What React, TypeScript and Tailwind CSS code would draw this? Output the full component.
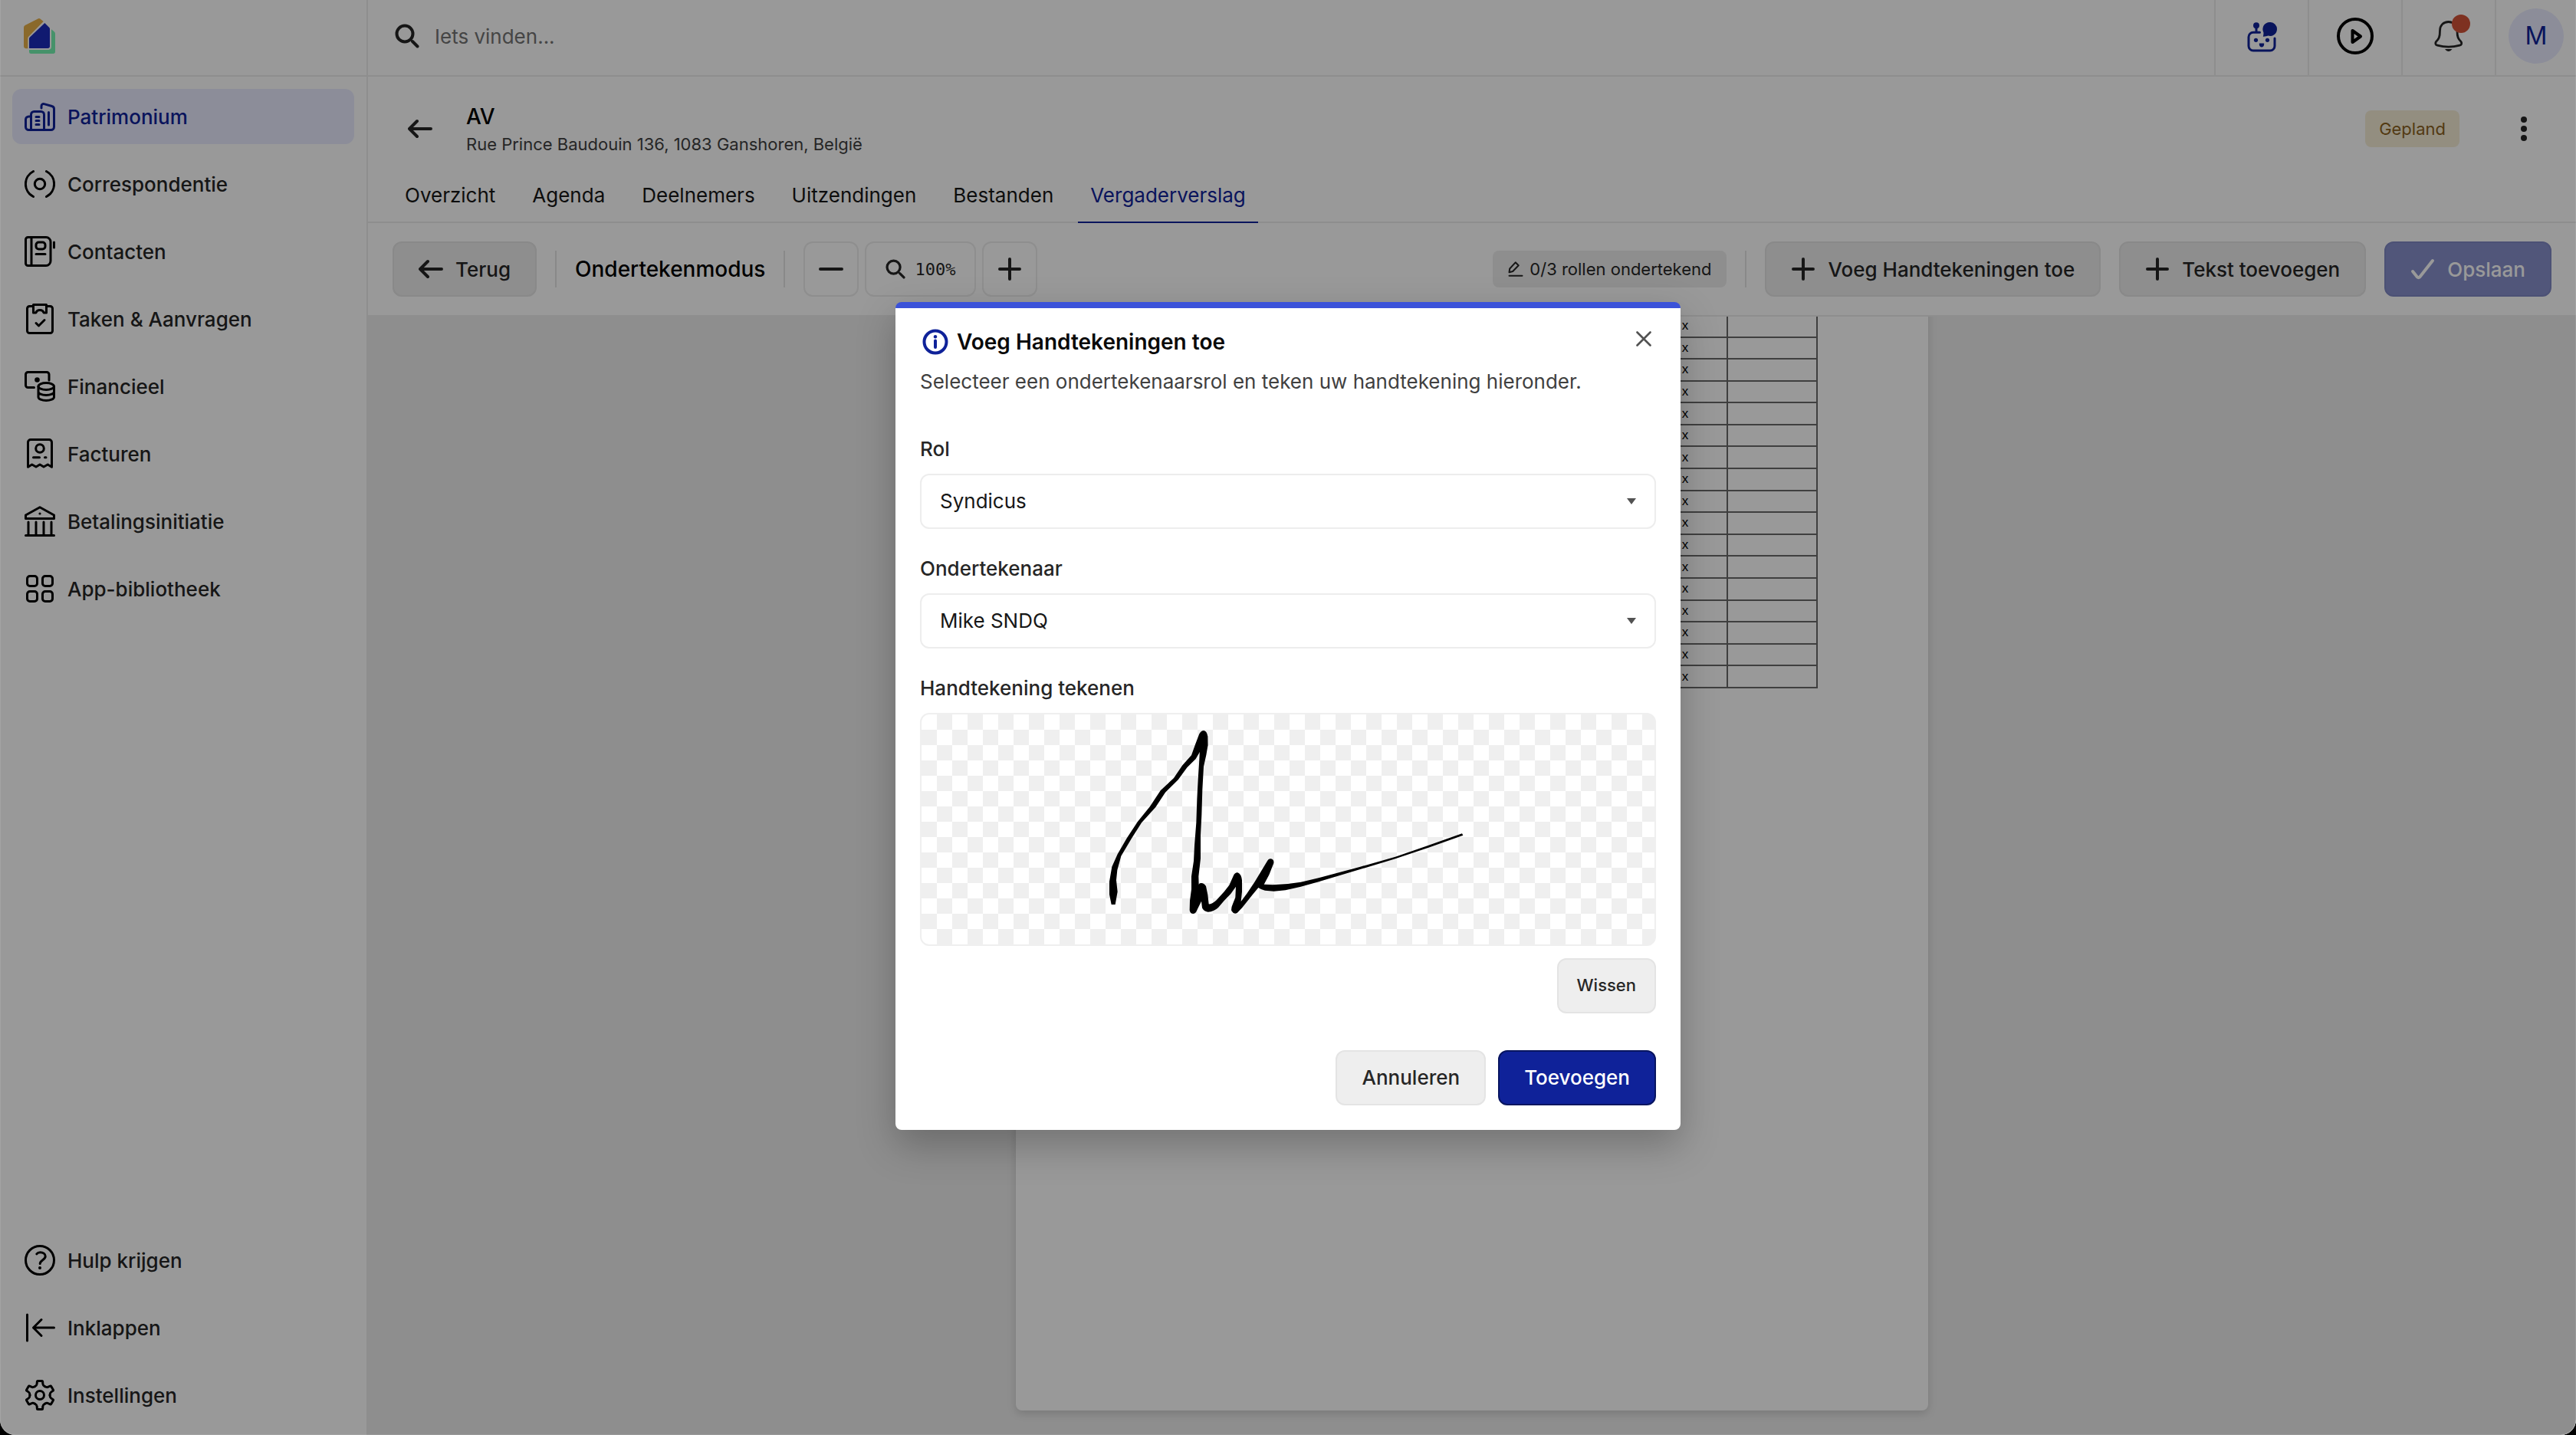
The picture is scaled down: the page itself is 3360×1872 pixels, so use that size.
import { useState } from "react";
import type { ReactNode } from "react";

const tabs = ["Overzicht", "Agenda", "Deelnemers", "Uitzendingen", "Bestanden", "Vergaderverslag"];

function SideIcon({ children }: { children: ReactNode }) {
  return (
    <svg
      viewBox="0 0 40 40"
      className="size-10 shrink-0"
      fill="none"
      stroke="currentColor"
      strokeWidth="3"
      strokeLinecap="round"
      strokeLinejoin="round"
      aria-hidden="true"
    >
      {children}
    </svg>
  );
}

const mainNav: { label: string; icon: ReactNode }[] = [
  {
    label: "Patrimonium",
    icon: (
      <>
        <path d="M22 9V6.500c0-2 1.600-3.400 3.500-2.900l10.200 2.900c1.600.4 2.800 1.900 2.800 3.600v23.400a4 4 0 0 1-4 4h-29a4 4 0 0 1-4-4V24a4 4 0 0 1 4-4H8" />
        <path d="M8.500 37.500v-20a4 4 0 0 1 4-4h9a4 4 0 0 1 4 4v20M15 20.500h4M15 25.500h4M15 30.500h4M31.500 14.500v16.500" />
      </>
    ),
  },
  {
    label: "Correspondentie",
    icon: (
      <>
        <circle cx="20" cy="20" r="6.700" />
        <path d="M11.500 3.500a18.500 18.500 0 0 0 0 33M28.500 3.500a18.500 18.500 0 0 1 0 33" />
      </>
    ),
  },
  {
    label: "Contacten",
    icon: (
      <>
        <path d="M4.500 1.500H28a6 6 0 0 1 6 6v25a6 6 0 0 1-6 6H4.500a3 3 0 0 1-3-3v-31a3 3 0 0 1 3-3ZM9 2v36M15 23.500h12M38.500 8v7" />
        <rect x="15" y="8" width="12" height="9" rx="3.500" />
      </>
    ),
  },
  {
    label: "Taken & Aanvragen",
    icon: (
      <>
        <path d="M11 3.500H6.500a3 3 0 0 0-3 3v29a3 3 0 0 0 3 3h27a3 3 0 0 0 3-3v-29a3 3 0 0 0-3-3H29" />
        <path d="M11.500 1.500h17V12H25c-.5-2-2.500-3.500-5-3.500s-4.500 1.500-5 3.500h-3.500ZM15 25.500l3.500 3.500 7.500-7.500" />
      </>
    ),
  },
  {
    label: "Financieel",
    icon: (
      <>
        <path d="M12.500 21.500h-8a3 3 0 0 1-3-3v-14a3 3 0 0 1 3-3H29a3 3 0 0 1 3 3V12" />
        <circle cx="16.500" cy="11.500" r="1.800" fill="currentColor" />
        <ellipse cx="28.200" cy="20" rx="10.200" ry="4.500" />
        <path d="M18 20v14c0 2.500 4.600 4.500 10.200 4.500S38.500 36.500 38.500 34V20M18 27c0 2.500 4.600 4.500 10.200 4.500S38.500 29.500 38.500 27" />
      </>
    ),
  },
  {
    label: "Facturen",
    icon: (
      <>
        <path d="M4.500 37.200V5a3.500 3.500 0 0 1 3.500-3.500h24A3.500 3.500 0 0 1 35.500 5v32.200L30.300 34 25 37l-5-3-5 3-5.300-3ZM11.500 24.700h8M26.500 24.700h1.500" />
        <circle cx="20" cy="13" r="5.300" />
      </>
    ),
  },
  {
    label: "Betalingsinitiatie",
    icon: (
      <>
        <path d="M1.500 16.500V12L20 1.800 38.500 12v4.500ZM5 21v16M15 21v16M25 21v16M35 21v16M1.500 38.500h37" />
        <circle cx="20" cy="10" r="1.600" fill="currentColor" stroke="none" />
      </>
    ),
  },
  {
    label: "App-bibliotheek",
    icon: (
      <>
        <rect x="3.500" y="3.500" width="13" height="13" rx="3.500" />
        <rect x="23.500" y="3.500" width="13" height="13" rx="3.500" />
        <rect x="3.500" y="23.500" width="13" height="13" rx="3.500" />
        <rect x="23.500" y="23.500" width="13" height="13" rx="3.500" />
      </>
    ),
  },
];

const footNav: { label: string; icon: ReactNode }[] = [
  {
    label: "Hulp krijgen",
    icon: (
      <>
        <circle cx="20" cy="20" r="18.500" />
        <path d="M15.800 11.800c1-1.300 2.600-2 4.700-2 3.800 0 6.700 2 6.700 5.200 0 4.500-7 5-7 9.500" />
        <circle cx="20" cy="30" r="2" fill="currentColor" stroke="none" />
      </>
    ),
  },
  {
    label: "Inklappen",
    icon: <path d="M3.500 3v34M38.500 20h-27M22 9.500 11.500 20 22 30.500" />,
  },
  {
    label: "Instellingen",
    icon: (
      <>
        {[0, 60, 120, 180, 240, 300].map((deg) => (
          <path
            key={deg}
            transform={`rotate(${deg} 20 20)`}
            d="M13.500 8.700C15.200 7.700 16 7 16.100 5.500L16.400 2.500a1 1 0 0 1 1-1h5.200a1 1 0 0 1 1 1L23.900 5.500C24 7 24.800 7.700 26.500 8.700"
          />
        ))}
        <circle cx="20" cy="20" r="5.500" />
      </>
    ),
  },
];

function NavItem({ label, icon, active }: { label: string; icon: ReactNode; active?: boolean }) {
  return (
    <a
      href="#"
      className={
        active
          ? "flex h-18 items-center gap-4 rounded-xl bg-[#e9ecff] px-4 text-[26px] font-medium text-[#0f2299]"
          : "flex h-18 items-center gap-4 rounded-xl px-4 text-[26px] font-medium text-[#262626]"
      }
    >
      <span className={active ? "text-[#0f2299]" : "text-black"}>
        <SideIcon>{icon}</SideIcon>
      </span>
      {label}
    </a>
  );
}

function Glyph({ d, className }: { d: string; className?: string }) {
  return (
    <svg
      viewBox="0 0 32 32"
      className={className ?? "size-8 shrink-0"}
      fill="none"
      stroke="currentColor"
      strokeWidth="4"
      strokeLinecap="round"
      strokeLinejoin="round"
      aria-hidden="true"
    >
      <path d={d} />
    </svg>
  );
}

const ARROW = "M30 16H2M12 6 2 16l10 10";
const PLUS = "M16 3v26M3 16h26";
const MINUS = "M2 16h28";
const SEARCH = "M13 2.500a10.500 10.500 0 1 0 0 21 10.500 10.500 0 0 0 0-21ZM23 23l6.500 6.500";

function Logo() {
  return (
    <svg viewBox="90 66 129 144" className="h-12 w-[43px]" aria-label="SNDQ" role="img">
      <path d="M93 178v-73q0-6 5-9l49-25q7-4 12 1l11 9-58 59q-3 3-3 7v40h-7q-9-1-9-9Z" fill="#e6b049" />
      <path d="m175 87 18 18q2 2 2 5v68q0 8-8 8h-73v-38q0-3 2-5Z" fill="#1b2cbb" />
      <path d="m201 112 11 9q4 3 4 8v70q0 8-8 8h-87q-7 0-7-7v-8h76q11-1 11-12Z" fill="#75f3b1" />
    </svg>
  );
}

function TopBar() {
  return (
    <header className="flex h-25 shrink-0 border-b-2 border-[#ededed]">
      <label className="flex flex-1 items-center gap-5 pb-1 pl-[35px]">
        <Glyph d={SEARCH} className="size-8 shrink-0 text-[#262626]" />
        <input
          type="search"
          placeholder="Iets vinden..."
          aria-label="Iets vinden"
          className="h-12 flex-1 bg-transparent text-[26px] outline-none placeholder:text-[#737373]"
        />
      </label>
      <button aria-label="Assistent" className="flex w-[122px] items-center justify-center border-l-2 border-[#ededed] text-[#0f2299]">
        <svg viewBox="0 0 40 40" className="size-10" fill="none" stroke="currentColor" strokeWidth="3" strokeLinecap="round">
          <path d="M17.500 13.300H9a6 6 0 0 0-6 6V31a6 6 0 0 0 6 6h22a6 6 0 0 0 6-6V21M13 5v8" />
          <g fill="currentColor" stroke="none">
            <circle cx="13" cy="4.300" r="4" />
            <circle cx="12.500" cy="23.300" r="2.600" />
            <circle cx="27.500" cy="23.300" r="2.600" />
            <path d="M17 27.500h6c.8 2.500-1 5-3 5s-3.800-2.500-3-5ZM30.400 0a9 9 0 1 1-2 17.600c-2 .8-4 1.200-6.600 1.100.6-2 .8-3.500.6-5.500A9 9 0 0 1 30.400 0Z" />
          </g>
        </svg>
      </button>
      <button aria-label="Afspelen" className="flex w-[122px] items-center justify-center border-l-2 border-[#ededed] pb-1">
        <svg viewBox="0 0 48 48" className="size-12" fill="none" stroke="currentColor" strokeWidth="4" strokeLinejoin="round">
          <circle cx="24" cy="24" r="22" />
          <path d="M20.500 17v15L31 24.500Z" />
        </svg>
      </button>
      <button aria-label="Meldingen" className="flex w-[122px] items-center justify-center border-l-2 border-[#ededed] pb-1 text-[#262626]">
        <span className="relative">
          <svg viewBox="0 0 40 40" className="size-10" fill="none" stroke="currentColor" strokeWidth="2.800" strokeLinejoin="round">
            <path d="M8.500 13C8.500 6 13 1.500 19.700 1.500S31 6 31 13c0 8.500 1.500 11 4.700 14 2 2.200 1.200 4.500-1.400 5.200-8.500 2.300-20.600 2.300-29.100 0C2.600 31.500 1.800 29.200 3.800 27 7 24 8.500 21.500 8.500 13Z" />
            <path d="M15 37c3 4 6.500 4 9.500 0Z" fill="currentColor" stroke="none" />
          </svg>
          <span className="absolute -top-2 left-6 size-6 rounded-full bg-[#d35338]" />
        </span>
      </button>
      <div className="flex items-center border-l-2 border-[#ededed] pr-4 pb-1 pl-4">
        <button className="flex size-18 items-center justify-center rounded-full bg-[#e9ecff] text-[32px] text-[#0f2299]">M</button>
      </div>
    </header>
  );
}

function PageHeader() {
  return (
    <div className="shrink-0 border-b-2 border-[#ededed] px-8 pt-8">
      <div className="flex h-18 items-center">
        <button aria-label="Terug naar overzicht" className="flex size-18 items-center justify-center text-[#262626]">
          <Glyph d={ARROW} />
        </button>
        <div className="ml-6 flex-1">
          <h1 className="text-[28px] leading-10 font-medium">AV</h1>
          <p className="text-[22px] leading-8 text-[#404040]">Rue Prince Baudouin 136, 1083 Ganshoren, België</p>
        </div>
        <span className="mr-12 rounded-lg bg-[#f5edd5] px-[18px] text-[22px] leading-[48px] text-[#8a621e]">Gepland</span>
        <button aria-label="Meer" className="flex size-18 items-center justify-center text-[#262626]">
          <svg viewBox="0 0 32 32" className="size-8" fill="currentColor">
            <circle cx="16" cy="4" r="4" />
            <circle cx="16" cy="16" r="4" />
            <circle cx="16" cy="28" r="4" />
          </svg>
        </button>
      </div>
      <nav className="mt-4 -mb-[2px] flex gap-4">
        {tabs.map((tab) => (
          <a
            key={tab}
            href="#"
            className={
              tab === "Vergaderverslag"
                ? "border-b-2 border-[#0f2299] px-4 text-[26px] leading-[69px] text-[#0f2299]"
                : "border-b-2 border-transparent px-4 text-[26px] leading-[69px] text-[#171717]"
            }
          >
            {tab}
          </a>
        ))}
      </nav>
    </div>
  );
}

function Divider() {
  return <span className="h-12 w-[2px] bg-[#e4e4e4]" />;
}

function Toolbar({ onAdd }: { onAdd: () => void }) {
  const grey =
    "flex h-18 items-center gap-4 rounded-xl border-2 border-[#e4e4e4] bg-[#ededed] px-8 text-[26px] font-medium text-[#262626]";
  return (
    <div className="flex shrink-0 items-center gap-6 border-b-2 border-[#ededed] px-8 py-6">
      <button className={grey}>
        <Glyph d={ARROW} />
        Terug
      </button>
      <Divider />
      <h2 className="text-[28px] font-medium">Ondertekenmodus</h2>
      <Divider />
      <div className="flex gap-2 text-[#262626]">
        <button aria-label="Uitzoomen" className="flex size-18 items-center justify-center rounded-xl border-2 border-[#ededed]">
          <Glyph d={MINUS} />
        </button>
        <button className="flex h-18 items-center gap-3 rounded-xl border-2 border-[#ededed] px-[25px] font-['DejaVu_Sans_Mono',monospace] text-[22px]">
          <Glyph d={SEARCH} className="size-[26px] shrink-0" />
          100%
        </button>
        <button aria-label="Inzoomen" className="flex size-18 items-center justify-center rounded-xl border-2 border-[#ededed]">
          <Glyph d={PLUS} />
        </button>
      </div>
      <span className="ml-auto flex h-12 items-center gap-2 rounded-lg bg-[#ededed] px-5 text-[22px] text-[#262626]">
        <svg viewBox="0 0 20 20" className="size-5" fill="none" stroke="currentColor" strokeWidth="2" strokeLinecap="round" strokeLinejoin="round">
          <path d="M1.500 18.700h17M1.500 14.300 2.200 9.500 9.700 1.300l4 3.900-7.500 7.800Z" />
        </svg>
        0/3 rollen ondertekend
      </span>
      <Divider />
      <button className={grey} onClick={onAdd}>
        <Glyph d={PLUS} />
        Voeg Handtekeningen toe
      </button>
      <button className={grey}>
        <Glyph d={PLUS} />
        Tekst toevoegen
      </button>
      <button
        disabled
        className="flex h-18 items-center gap-4 rounded-xl border-2 border-[#7f87c3] bg-[#8790cc] px-8 text-[26px] font-medium text-white"
      >
        <Glyph d="M3 19l6 7.500Q11 28 12.500 26L29 5" />
        Opslaan
      </button>
    </div>
  );
}

function DocumentPage() {
  return (
    <main className="flex min-h-0 flex-1 items-end justify-center overflow-hidden bg-[#ededed] pb-8">
      <article className="h-[1684px] w-[1190px] shrink-0 rounded-lg bg-white px-36 pt-[254px] shadow-[0_4px_12px_rgba(0,0,0,0.15)]">
        <table className="h-[488px] w-full table-fixed border-collapse font-['Liberation_Sans',sans-serif] text-[17px] leading-5">
          <colgroup>
            <col />
            <col className="w-[110px]" />
            <col className="w-[117px]" />
          </colgroup>
          <tbody>
            {Array.from({ length: 17 }, (_, i) => (
              <tr key={i}>
                <td className="border-2 border-[#6a6a6a] p-0" />
                <td className="border-2 border-[#6a6a6a] p-0 text-center">x</td>
                <td className="border-2 border-[#6a6a6a] p-0" />
              </tr>
            ))}
          </tbody>
        </table>
      </article>
    </main>
  );
}

function SelectField({ id, label, options }: { id: string; label: string; options: string[] }) {
  return (
    <div className="mb-8">
      <label htmlFor={id} className="block text-[26px] leading-10 font-medium text-[#262626]">
        {label}
      </label>
      <div className="relative mt-3">
        <select
          id={id}
          className="h-18 w-full appearance-none rounded-xl border-2 border-[#ededed] bg-white px-6 text-[26px] text-[#171717] outline-none"
        >
          {options.map((o) => (
            <option key={o}>{o}</option>
          ))}
        </select>
        <svg viewBox="0 0 12 8" className="pointer-events-none absolute top-8 right-[26px] h-2 w-3" fill="#525252">
          <path d="M0 0h12L6 8Z" />
        </svg>
      </div>
    </div>
  );
}

function Signature() {
  return (
    <svg viewBox="-654 6 2868 900" className="size-full" role="img" aria-labelledby="sign-label">
      <path d="M89 750 81 710 81 660 91 602 113 553 150 489 192 425 240 366 281 304 333 255 367 205 402 166 417 124 433 82Q440 69 451 69 462 72 465 88L466 130 444 137 419 180 385 214 350 262 300 311 262 369 207 430 167 493 127 560 112 615 108 655 113 700 104 750Z" />
      <path d="M436 120 432 200 428 260 424 340 421 430 414 520 411 580 402 640 402 690 396 735 395 772Q396 786 410 786 420 784 424 772L441 737 444 763Q450 778 467 779 490 778 507 762L530 735 556 708 576 680 574 722 565 745Q556 765 559 775 568 790 581 783L601 762 641 712 664 684Q675 692 690 695L725 698 770 694 830 680 900 661 1060 613 1200 571 1330 527 1465 479 1461 472 1330 518 1200 563 1060 603 900 646 830 662 780 669 720 673 686 671 706 634 724 588Q726 574 713 571 704 570 698 581L679 613 650 661 620 706 596 738 600 700 600 655Q597 630 583 625 573 624 567 636L550 674 530 700 500 733Q482 750 470 748L466 712 459 678Q450 664 438 666 432 668 431 672L430 640 438 570 438 480 442 400 445 300 450 210 460 165 466 130 466 90Z" />
    </svg>
  );
}

function SignatureDialog({ onClose }: { onClose: () => void }) {
  const [signed, setSigned] = useState(true);

  return (
    <div
      role="dialog"
      aria-modal="true"
      aria-labelledby="dialog-title"
      className="w-full max-w-5xl overflow-hidden rounded-lg border-t-8 border-[#3b52d9] bg-white px-8 pt-6 pb-8 shadow-[0_20px_50px_rgba(0,0,0,0.25)]"
    >
      <div className="flex h-10 items-center gap-2">
        <svg viewBox="0 0 40 40" className="size-10 text-[#0f2299]" fill="none" stroke="currentColor" strokeWidth="4" aria-hidden="true">
          <circle cx="20" cy="20" r="14.500" />
          <path d="M20 18.500v8.500" strokeLinecap="round" />
          <circle cx="20" cy="13.200" r="2.200" fill="currentColor" stroke="none" />
        </svg>
        <h3 id="dialog-title" className="flex-1 text-[28px] font-semibold text-[#0a0a0a]">
          Voeg Handtekeningen toe
        </h3>
        <button aria-label="Sluiten" onClick={onClose} className="flex size-8 items-center justify-center pb-2 text-[#525252]">
          <svg viewBox="0 0 20 20" className="size-5" stroke="currentColor" strokeWidth="2.600" strokeLinecap="round">
            <path d="m1.500 1.500 17 17M18.500 1.500l-17 17" />
          </svg>
        </button>
      </div>
      <p className="mt-3 mb-12 text-[26px] leading-10 text-[#404040]">
        Selecteer een ondertekenaarsrol en teken uw handtekening hieronder.
      </p>
      <SelectField id="rol" label="Rol" options={["Syndicus", "Voorzitter", "Secretaris"]} />
      <SelectField id="ondertekenaar" label="Ondertekenaar" options={["Mike SNDQ"]} />
      <div id="sign-label" className="text-[26px] leading-10 font-medium text-[#262626]">
        Handtekening tekenen
      </div>
      <div className="mt-3 h-[304px] overflow-hidden rounded-xl border-2 border-[#efefef] bg-[repeating-conic-gradient(#efefef_0_25%,#fff_0_50%)] bg-[length:40px_40px]">
        {signed && <Signature />}
      </div>
      <div className="mt-4 flex justify-end">
        <button
          onClick={() => setSigned(false)}
          className="h-18 rounded-xl border-2 border-[#e4e4e4] bg-[#eee] px-6 text-[22px] font-medium text-[#262626]"
        >
          Wissen
        </button>
      </div>
      <div className="mt-12 flex justify-end gap-4">
        <button
          onClick={onClose}
          className="h-18 rounded-xl border-2 border-[#e4e4e4] bg-[#eee] px-8 text-[26px] font-medium text-[#262626]"
        >
          Annuleren
        </button>
        <button
          onClick={onClose}
          className="h-18 rounded-xl border-2 border-[#081560] bg-[#0f2299] px-8 text-[26px] font-medium text-white"
        >
          Toevoegen
        </button>
      </div>
    </div>
  );
}

export default function App() {
  const [open, setOpen] = useState(true);

  return (
    <div className="h-screen bg-black font-['Inter',sans-serif]">
      <div className="relative flex h-full overflow-hidden rounded-b-[20px] bg-white text-black">
        <aside className="flex w-120 shrink-0 flex-col border-r-2 border-[#ededed]">
          <div className="flex h-25 items-center border-b-2 border-[#ededed] pb-1 pl-[30px]">
            <Logo />
          </div>
          <nav className="flex flex-1 flex-col gap-4 p-4">
            {mainNav.map((item) => (
              <NavItem key={item.label} {...item} active={item.label === "Patrimonium"} />
            ))}
            <div className="mt-auto flex flex-col gap-4">
              {footNav.map((item) => (
                <NavItem key={item.label} {...item} />
              ))}
            </div>
          </nav>
        </aside>
        <div className="flex min-w-0 flex-1 flex-col">
          <TopBar />
          <PageHeader />
          <Toolbar onAdd={() => setOpen(true)} />
          <DocumentPage />
        </div>
        {open && (
          <div className="absolute inset-0 flex items-center justify-center rounded-b-[20px] border-x border-b border-white/10 bg-black/40 pb-1">
            <SignatureDialog onClose={() => setOpen(false)} />
          </div>
        )}
      </div>
    </div>
  );
}
